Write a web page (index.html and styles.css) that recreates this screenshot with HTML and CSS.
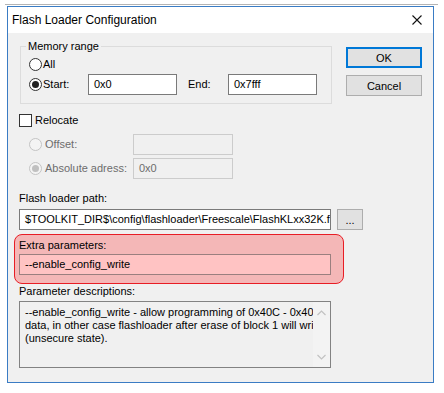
FILE: index.html
```html
<!DOCTYPE html>
<html lang="en">
<head>
    <meta charset="UTF-8">
    <meta name="viewport" content="width=device-width, initial-scale=1.0">
    <title>Flash Loader Configuration</title>
    <link rel="stylesheet" href="styles.css">
</head>
<body>
    <div class="desk">
        <div class="dialog">
            <div class="titlebar">
                <span class="title">Flash Loader Configuration</span>
                <svg class="close" width="10" height="10" viewBox="0 0 10 10">
                    <path d="M0.5 0.5 L9.5 9.5 M9.5 0.5 L0.5 9.5" stroke="#111" stroke-width="1.1" fill="none"/>
                </svg>
            </div>
            <div class="client">
                <div class="top">
                    <fieldset class="group">
                        <legend>Memory range</legend>
                        <div class="row row-all">
                            <span class="radio"></span>
                            <span class="lbl">All</span>
                        </div>
                        <div class="row row-start">
                            <span class="radio checked"></span>
                            <span class="lbl start-lbl">Start:</span>
                            <span class="field mem">0x0</span>
                            <span class="lbl end-lbl">End:</span>
                            <span class="field mem">0x7fff</span>
                        </div>
                    </fieldset>
                    <div class="buttons">
                        <button class="btn default">OK</button>
                        <button class="btn">Cancel</button>
                    </div>
                </div>

                <div class="check-row">
                    <span class="checkbox"></span>
                    <span class="lbl">Relocate</span>
                </div>
                <div class="row sub-row first">
                    <span class="radio disabled"></span>
                    <span class="lbl dim sub-lbl">Offset:</span>
                    <span class="field off"></span>
                </div>
                <div class="row sub-row">
                    <span class="radio disabled checked"></span>
                    <span class="lbl dim sub-lbl">Absolute adress:</span>
                    <span class="field off">0x0</span>
                </div>

                <div class="caption path-caption">Flash loader path:</div>
                <div class="row path-row">
                    <span class="field wide">$TOOLKIT_DIR$\config\flashloader\Freescale\FlashKLxx32K.flash</span>
                    <button class="btn browse">...</button>
                </div>

                <div class="highlight">
                    <div class="caption">Extra parameters:</div>
                    <span class="field wide pink">--enable_config_write</span>
                </div>

                <div class="caption desc-caption">Parameter descriptions:</div>
                <div class="memo">
                    <div class="memo-text">
                        <div>--enable_config_write - allow programming of 0x40C - 0x40F flash configuration field</div>
                        <div>data, in other case flashloader after erase of block 1 will write 0xFFFFFFFE</div>
                        <div>(unsecure state).</div>
                    </div>
                    <div class="scrollbar">
                        <svg width="9" height="6" viewBox="0 0 9 6"><path d="M0.5 5 L4.5 1 L8.5 5" stroke="#c2c2c2" stroke-width="1.2" fill="none"/></svg>
                        <svg width="9" height="6" viewBox="0 0 9 6"><path d="M0.5 1 L4.5 5 L8.5 1" stroke="#c2c2c2" stroke-width="1.2" fill="none"/></svg>
                    </div>
                </div>
            </div>
        </div>
    </div>
</body>
</html>
```

FILE: styles.css
```css
* {
    box-sizing: border-box;
}

body {
    margin: 0;
    background: #ffffff;
    font-family: 'Liberation Sans', Arial, sans-serif;
    font-size: 11px;
    color: #000;
}

.desk {
    margin: 4px 6px 0 5px;
    border-top: 1px solid #b4b4b4;
}

.dialog {
    margin: 1px 0 0 2px;
    width: 427px;
    height: 377px;
    border: 1px solid #3a7cc4;
    display: flex;
    flex-direction: column;
    background: #f0f0f0;
}

.titlebar {
    height: 26px;
    background: #ffffff;
    display: flex;
    align-items: center;
    padding-left: 4px;
}

.title {
    font-size: 12px;
    flex: 1;
}

.close {
    margin-right: 11px;
}

.client {
    flex: 1;
    padding-left: 11px;
}

.top {
    display: flex;
    align-items: flex-start;
}

.group {
    margin: 7px 0 0 1px;
    width: 312px;
    padding: 0 0 8px 8px;
    border: 1px solid #dcdcdc;
    min-width: 0;
}

.group legend {
    padding: 0 2px;
    margin-left: -3px;
    line-height: 13px;
}

.row {
    display: flex;
    align-items: center;
}

.row-all {
    height: 14px;
    margin-top: 4px;
}

.row-start {
    height: 21px;
    margin-top: 3px;
}

.radio {
    width: 13px;
    height: 13px;
    border: 1px solid #333;
    border-radius: 50%;
    background: #fff;
    display: flex;
    align-items: center;
    justify-content: center;
    flex-shrink: 0;
}

.radio.checked::after {
    content: '';
    width: 7px;
    height: 7px;
    border-radius: 50%;
    background: #222;
}

.radio.disabled {
    border-color: #c4c4c4;
    background: #f4f4f4;
}

.radio.disabled.checked::after {
    background: #c0c0c0;
}

.lbl {
    margin-left: 1px;
    line-height: 13px;
    white-space: nowrap;
}

.dim {
    color: #6d6d6d;
}

.start-lbl {
    width: 45px;
}

.end-lbl {
    margin-left: 11px;
    width: 40px;
}

.field {
    height: 21px;
    border: 1px solid #7a7a7a;
    background: #fff;
    padding-left: 5px;
    line-height: 19px;
    white-space: nowrap;
    overflow: hidden;
}

.field.mem {
    width: 89px;
}

.field.off {
    width: 100px;
    border-color: #cccccc;
    background: #f0f0f0;
    color: #6d6d6d;
}

.field.wide {
    width: 312px;
}

.field.pink {
    display: block;
    margin-top: 2px;
    background: #ffc3c3;
    border-color: #9a7f7f;
}

.buttons {
    margin: 14px 0 0 14px;
    display: flex;
    flex-direction: column;
    gap: 7px;
}

.btn {
    width: 76px;
    height: 21px;
    padding: 0;
    border: 1px solid #adadad;
    background: #e1e1e1;
    font-family: inherit;
    font-size: 11px;
    color: #000;
}

.btn.default {
    border: 2px solid #0078d7;
}

.check-row {
    display: flex;
    align-items: center;
    height: 13px;
    margin-top: 10px;
}

.checkbox {
    width: 13px;
    height: 13px;
    border: 1px solid #333;
    background: #fff;
}

.check-row .lbl {
    margin-left: 3px;
}

.sub-row {
    height: 21px;
    margin-top: 3px;
    padding-left: 10px;
}

.sub-row.first {
    margin-top: 7px;
}

.sub-lbl {
    margin-left: 3px;
    width: 88px;
}

.caption {
    line-height: 13px;
}

.path-caption {
    margin-top: 13px;
}

.path-row {
    margin-top: 4px;
}

.btn.browse {
    width: 26px;
    margin-left: 6px;
    line-height: 14px;
}

.highlight {
    margin: 4px 0 0 -5px;
    width: 330px;
    height: 50px;
    border: 1px solid #e81d25;
    border-radius: 8px;
    background: #f4b7b7;
    padding: 4px 0 0 4px;
}

.desc-caption {
    margin-top: 1px;
}

.memo {
    margin-top: 3px;
    width: 312px;
    height: 67px;
    border: 1px solid #828282;
    background: #f0f0f0;
    display: flex;
}

.memo-text {
    flex: 1;
    overflow: hidden;
    padding: 4px 0 0 5px;
    line-height: 13px;
    white-space: nowrap;
}

.scrollbar {
    width: 17px;
    background: #f3f3f3;
    display: flex;
    flex-direction: column;
    align-items: center;
    justify-content: space-between;
    padding: 8px 0 7px;
}
```
